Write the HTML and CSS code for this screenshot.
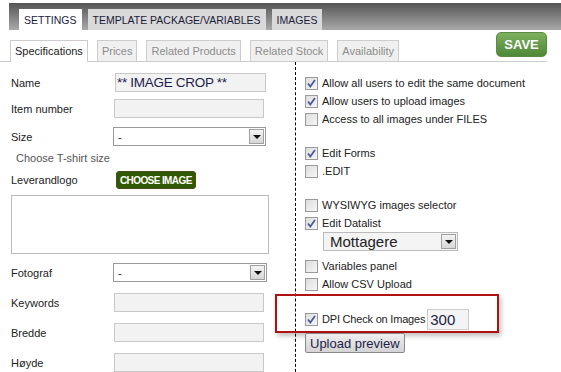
FILE: index.html
```html
<!DOCTYPE html>
<html lang="en">
<head>
    <meta charset="UTF-8">
    <title>Product settings</title>
    <link rel="stylesheet" href="styles.css">
</head>
<body>

<div class="topbar">
    <a class="tab active">SETTINGS</a>
    <a class="tab">TEMPLATE PACKAGE/VARIABLES</a>
    <a class="tab">IMAGES</a>
</div>

<div class="subbar">
    <div class="subtabs">
        <a class="subtab active">Specifications</a>
        <a class="subtab">Prices</a>
        <a class="subtab">Related Products</a>
        <a class="subtab">Related Stock</a>
        <a class="subtab">Availability</a>
    </div>
    <button class="save">SAVE</button>
</div>

<div class="content">
    <div class="left">
        <div class="row r-name">
            <label>Name</label>
            <div class="field big">** IMAGE CROP **</div>
        </div>
        <div class="row r-item">
            <label>Item number</label>
            <div class="field"></div>
        </div>
        <div class="row r-size">
            <label>Size</label>
            <div class="select"><span>-</span><i class="arrow"></i></div>
        </div>
        <div class="hint">Choose T-shirt size</div>
        <div class="row r-logo">
            <label>Leverandlogo</label>
            <button class="choose">CHOOSE IMAGE</button>
        </div>
        <div class="textarea"></div>
        <div class="row r-foto">
            <label>Fotograf</label>
            <div class="select wide"><span>-</span><i class="arrow"></i></div>
        </div>
        <div class="row r-key">
            <label>Keywords</label>
            <div class="field"></div>
        </div>
        <div class="row r-more">
            <label>Bredde</label>
            <div class="field"></div>
        </div>
        <div class="row r-more">
            <label>Høyde</label>
            <div class="field"></div>
        </div>
    </div>

    <div class="right">
        <div class="check on">Allow all users to edit the same document</div>
        <div class="check on">Allow users to upload images</div>
        <div class="check">Access to all images under FILES</div>
        <div class="spacer"></div>
        <div class="check on">Edit Forms</div>
        <div class="check">.EDIT</div>
        <div class="spacer"></div>
        <div class="check">WYSIWYG images selector</div>
        <div class="check on">Edit Datalist</div>
        <div class="select datalist"><span>Mottagere</span><i class="arrow"></i></div>
        <div class="check">Variables panel</div>
        <div class="check">Allow CSV Upload</div>
        <div class="highlight">
            <div class="check on">DPI Check on Images <span class="dpi">300</span></div>
        </div>
        <button class="upload">Upload preview</button>
    </div>
</div>

</body>
</html>
```

FILE: styles.css
```css
body {
    margin: 0;
    font-family: "Liberation Sans", Arial, sans-serif;
    font-size: 11px;
    color: #222;
    background: #fff;
}

/* top tabs */
.topbar {
    margin: 3px 0 0 9px;
    height: 27px;
    padding-left: 10px;
    display: flex;
    align-items: flex-end;
    gap: 6px;
    background: linear-gradient(#555, #a9a9a9);
}
.tab {
    height: 21px;
    line-height: 23px;
    padding: 0 5px;
    background: #d9d9d9;
    color: #1c1c3c;
    font-size: 10.5px;
}
.tab.active {
    background: #fff;
}

/* sub tabs */
.subbar {
    width: 547px;
    height: 31px;
    border-bottom: 1px solid #ccc;
    display: flex;
    justify-content: space-between;
    align-items: flex-end;
}
.subtabs {
    display: flex;
    gap: 9px;
    padding-left: 10px;
}
.subtab {
    height: 20px;
    line-height: 21px;
    padding: 0 4px;
    border: 1px solid #ccc;
    border-bottom: none;
    background: #f0f0f0;
    color: #8c8c8c;
}
.subtab.active {
    background: #fff;
    color: #222;
    height: 21px;
    margin-bottom: -1px;
}
.save {
    align-self: flex-start;
    margin-top: 2px;
    width: 51px;
    height: 25px;
    border: 1px solid #5a8a44;
    border-radius: 5px;
    background: linear-gradient(#7bb05e, #4f8838);
    color: #fff;
    font-family: "Liberation Sans", Arial, sans-serif;
    font-weight: bold;
    font-size: 13px;
    padding: 0;
}

/* layout */
.content {
    display: flex;
}
.left {
    width: 295px;
    display: flex;
    flex-direction: column;
}
.right {
    flex: 1;
    border-left: 1px dashed #000;
    border-bottom: 1px dashed #000;
    height: 307px;
    padding: 12px 0 0 9px;
    display: flex;
    flex-direction: column;
}

/* left form */
.row {
    display: flex;
    align-items: center;
    height: 19px;
    padding-left: 11px;
}
.row label {
    width: 102px;
    flex: none;
}
.r-name { margin-top: 11px; }
.r-item { margin-top: 7px; }
.r-size { margin-top: 9px; }
.r-logo { margin-top: 4px; height: 18px; }
.r-foto { margin-top: 9px; }
.r-key { margin-top: 11px; }
.r-more { margin-top: 11px; }
.field {
    width: 148px;
    height: 17px;
    margin-left: 1px;
    border: 1px solid #c8c8c8;
    background: #f2f2f2;
}
.field.big {
    font-size: 13.5px;
    line-height: 18px;
    letter-spacing: -0.3px;
    color: #1e1e4a;
    padding-left: 1px;
    width: 148px;
    margin-left: 2px;
}
.select {
    width: 147px;
    height: 17px;
    border: 1px solid #999;
    background: #fff;
    display: flex;
    align-items: center;
    justify-content: space-between;
    padding-left: 4px;
}
.select.wide { width: 148px; }
.arrow {
    width: 15px;
    height: 15px;
    margin-right: 1px;
    border: 1px solid #a0a0a0;
    box-sizing: border-box;
    background: linear-gradient(#f4f4f4, #d6d6d6);
    position: relative;
}
.arrow::after {
    content: "";
    position: absolute;
    left: 3px;
    top: 5px;
    border: 4px solid transparent;
    border-top: 4px solid #111;
    border-bottom: none;
}
.hint {
    margin: 3px 0 0 16px;
    height: 18px;
    line-height: 18px;
    color: #555;
}
.choose {
    margin-left: 3px;
    height: 18px;
    padding: 0 3px;
    border: 1px solid #4c4c1c;
    border-radius: 3px;
    background: #2f5a00;
    color: #fff;
    font-family: "Liberation Sans", Arial, sans-serif;
    font-weight: bold;
    font-size: 10px;
    letter-spacing: -0.6px;
}
.textarea {
    margin: 6px 0 0 11px;
    width: 256px;
    height: 57px;
    border: 1px solid #bbb;
}

/* right column */
.check {
    display: flex;
    align-items: center;
    height: 18px;
    color: #222;
}
.check::before {
    content: "";
    width: 11px;
    height: 11px;
    margin-right: 4px;
    border: 1px solid #9a9a9a;
    background: linear-gradient(135deg, #ddd, #f6f6f6);
    flex: none;
}
.check.on::before {
    background: url("data:image/svg+xml,%3Csvg xmlns='http://www.w3.org/2000/svg' viewBox='0 0 11 11'%3E%3Cpath d='M2 5.5 L4.3 8.5 L9 2' fill='none' stroke='%234a5a9c' stroke-width='1.8'/%3E%3C/svg%3E"), linear-gradient(135deg, #ddd, #f6f6f6);
}
.spacer {
    height: 16px;
}
.select.datalist {
    margin: 0 0 6px 18px;
    width: 127px;
    height: 17px;
    font-size: 15px;
    background: #f4f4f4;
    border-color: #bbb;
    padding-left: 6px;
}
.highlight {
    margin: 1px 0 0 -30px;
    width: 224px;
    height: 39px;
    border: 2px solid #b01010;
    box-shadow: 2px 3px 5px rgba(0, 0, 0, 0.25);
    padding: 14px 0 0 28px;
    box-sizing: border-box;
}
.highlight .check {
    letter-spacing: -0.2px;
}
.dpi {
    display: inline-block;
    margin-left: 2px;
    width: 38px;
    height: 19px;
    line-height: 19px;
    padding-left: 2px;
    border: 1px solid #ccc;
    background: #f4f4f4;
    font-size: 15px;
    letter-spacing: 0;
    color: #1e1e4a;
}
.upload {
    align-self: flex-start;
    margin-top: 0;
    height: 20px;
    padding: 0 4px;
    border: 1px solid #888;
    border-radius: 2px;
    background: linear-gradient(#eee, #d4d4d4);
    color: #1e1e4a;
    font-family: "Liberation Sans", Arial, sans-serif;
    font-size: 13px;
}
```
